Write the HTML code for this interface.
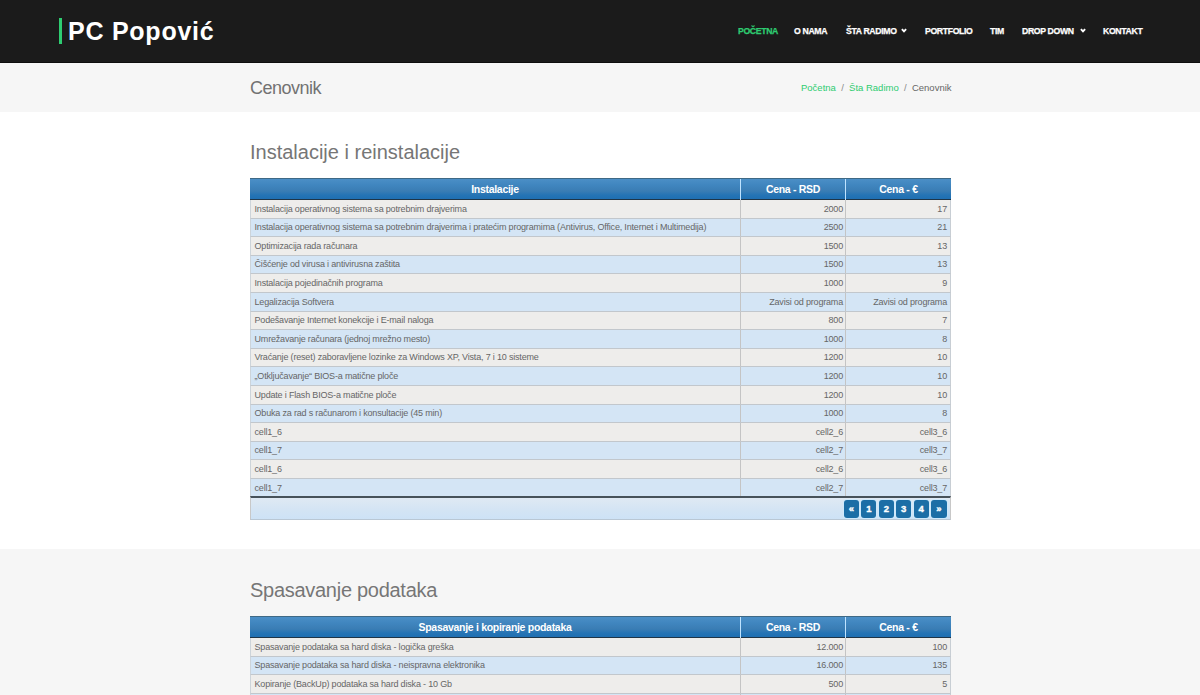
<!DOCTYPE html>
<html><head><meta charset="utf-8">
<style>
*{box-sizing:border-box;margin:0;padding:0}
html,body{width:1200px;height:695px;overflow:hidden;background:#fff;font-family:"Liberation Sans",sans-serif}
.hdr{position:absolute;left:0;top:0;width:1200px;height:63px;background:#1b1b1b;border-bottom:1px solid #0e0e0e}
.logo-bar{position:absolute;left:59px;top:18px;width:3px;height:26px;background:#2ecc71}
.logo{position:absolute;left:68px;top:15px;font-size:25px;font-weight:bold;color:#fff;letter-spacing:0.75px;white-space:nowrap;line-height:32px}
.nav{position:absolute;top:26px;font-size:8.7px;font-weight:bold;color:#fff;white-space:nowrap;line-height:10px;letter-spacing:-0.35px;-webkit-text-stroke:0.25px #fff}
.nav.act{-webkit-text-stroke-color:#2ecc71}
.nav.act{color:#2ecc71}
.chev{position:absolute;top:28px;width:6px;height:5px}
.band{position:absolute;left:0;top:63px;width:1200px;height:49px;background:#f6f6f6}
.ptitle{position:absolute;left:250px;top:77px;font-size:18px;letter-spacing:-0.5px;color:#727272;line-height:22px;white-space:nowrap}
.bc{position:absolute;top:82px;font-size:9.5px;line-height:12px;white-space:nowrap;color:#666}
.bc a{color:#2ecc71;text-decoration:none}
.bc .sep{color:#888}
.sec2{position:absolute;left:0;top:549px;width:1200px;height:146px;background:#f6f6f6}
.h2{position:absolute;left:250px;font-size:20px;color:#767676;line-height:26px;white-space:nowrap}
.tbl{position:absolute;left:250px;width:701px}
.th{position:absolute;left:0;top:0;width:701px;height:22px;background:linear-gradient(#4b8fc6 0%,#4086bf 30%,#3a7db4 60%,#2574b5 80%,#1f6fb2 100%);border-top:1px solid #3f6985;border-bottom:1px solid #1f3547}
.th div{position:absolute;top:0;height:21px;line-height:20px;text-align:center;color:#fff;font-weight:bold;font-size:10.5px;letter-spacing:-0.3px}
.th .d{position:absolute;top:0;width:1px;height:21px;background:#bfe3ff}
.row{position:absolute;left:0;width:701px;border-bottom:1px solid #c2c7cc;border-left:1px solid #cdd4da;border-right:1px solid #c8ced4}
.row.o{background:#eeedeb}
.row.e{background:#d4e5f5}
.row div{position:absolute;top:0;font-size:9px;letter-spacing:-0.18px;color:#666;white-space:nowrap}
.row .c1{left:3.5px}
.row .c2{right:107px;text-align:right}
.row .c3{right:3px;text-align:right}
.row .d{width:1px;background:#c4c4c4;top:0;bottom:0}
.ft{position:absolute;left:0;width:701px;height:24px;background:linear-gradient(#dfe9f3,#d3e4f4 60%,#cde2f6);border-top:2px solid #47525a;border-left:1px solid #c8c8c8;border-right:1px solid #c8c8c8;border-bottom:1px solid #b9c7d4}
.pg{position:absolute;top:2px;width:15px;height:18px;background:#1c6ea6;border-radius:3px;box-shadow:0 0 0 1px #cfe9fb;color:#fff;font-weight:bold;font-size:9.5px;line-height:18px;text-align:center;-webkit-text-stroke:0.35px #fff}
</style></head><body>
<div class="hdr">
  <div class="logo-bar"></div>
  <div class="logo">PC Popović</div>
  <div class="nav act" style="left:738px">POČETNA</div>
  <div class="nav" style="left:794px">O NAMA</div>
  <div class="nav" style="left:846px">ŠTA RADIMO</div>
  <svg class="chev" style="left:901px" viewBox="0 0 6 5"><path d="M0.9 1.2 L3 3.4 L5.1 1.2" stroke="#fff" stroke-width="1.9" fill="none"/></svg>
  <div class="nav" style="left:925px">PORTFOLIO</div>
  <div class="nav" style="left:990px">TIM</div>
  <div class="nav" style="left:1022px">DROP DOWN</div>
  <svg class="chev" style="left:1080px" viewBox="0 0 6 5"><path d="M0.9 1.2 L3 3.4 L5.1 1.2" stroke="#fff" stroke-width="1.9" fill="none"/></svg>
  <div class="nav" style="left:1103px">KONTAKT</div>
</div>
<div class="band">
</div>
<div class="ptitle">Cenovnik</div>
<div class="bc" style="left:801px"><a>Početna</a> <span class="sep">&nbsp;/&nbsp;</span> <a>Šta Radimo</a> <span class="sep">&nbsp;/&nbsp;</span> Cenovnik</div>

<div class="h2" style="top:139px">Instalacije i reinstalacije</div>
<div class="tbl" id="t1" style="top:178px">
<div class="th">
<div style="left:0;width:490px">Instalacije</div>
<div class="d" style="left:490px"></div>
<div style="left:491px;width:104px">Cena - RSD</div>
<div class="d" style="left:595px"></div>
<div style="left:596px;width:105px">Cena - €</div>
</div>
<div class="row o" style="top:22px;height:19px;line-height:18px"><div class="c1">Instalacija operativnog sistema sa potrebnim drajverima</div><div class="d" style="left:489px"></div><div class="c2">2000</div><div class="d" style="left:594px"></div><div class="c3">17</div></div>
<div class="row e" style="top:41px;height:18px;line-height:17px"><div class="c1">Instalacija operativnog sistema sa potrebnim drajverima i pratećim programima (Antivirus, Office, Internet i Multimedija)</div><div class="d" style="left:489px"></div><div class="c2">2500</div><div class="d" style="left:594px"></div><div class="c3">21</div></div>
<div class="row o" style="top:59px;height:19px;line-height:18px"><div class="c1">Optimizacija rada računara</div><div class="d" style="left:489px"></div><div class="c2">1500</div><div class="d" style="left:594px"></div><div class="c3">13</div></div>
<div class="row e" style="top:78px;height:18px;line-height:17px"><div class="c1">Čišćenje od virusa i antivirusna zaštita</div><div class="d" style="left:489px"></div><div class="c2">1500</div><div class="d" style="left:594px"></div><div class="c3">13</div></div>
<div class="row o" style="top:96px;height:19px;line-height:18px"><div class="c1">Instalacija pojedinačnih programa</div><div class="d" style="left:489px"></div><div class="c2">1000</div><div class="d" style="left:594px"></div><div class="c3">9</div></div>
<div class="row e" style="top:115px;height:19px;line-height:18px"><div class="c1">Legalizacija Softvera</div><div class="d" style="left:489px"></div><div class="c2">Zavisi od programa</div><div class="d" style="left:594px"></div><div class="c3">Zavisi od programa</div></div>
<div class="row o" style="top:134px;height:18px;line-height:17px"><div class="c1">Podešavanje Internet konekcije i E-mail naloga</div><div class="d" style="left:489px"></div><div class="c2">800</div><div class="d" style="left:594px"></div><div class="c3">7</div></div>
<div class="row e" style="top:152px;height:19px;line-height:18px"><div class="c1">Umrežavanje računara (jednoj mrežno mesto)</div><div class="d" style="left:489px"></div><div class="c2">1000</div><div class="d" style="left:594px"></div><div class="c3">8</div></div>
<div class="row o" style="top:171px;height:18px;line-height:17px"><div class="c1">Vraćanje (reset) zaboravljene lozinke za Windows XP, Vista, 7 i 10 sisteme</div><div class="d" style="left:489px"></div><div class="c2">1200</div><div class="d" style="left:594px"></div><div class="c3">10</div></div>
<div class="row e" style="top:189px;height:19px;line-height:18px"><div class="c1">„Otključavanje“ BIOS-a matične ploče</div><div class="d" style="left:489px"></div><div class="c2">1200</div><div class="d" style="left:594px"></div><div class="c3">10</div></div>
<div class="row o" style="top:208px;height:19px;line-height:18px"><div class="c1">Update i Flash BIOS-a matične ploče</div><div class="d" style="left:489px"></div><div class="c2">1200</div><div class="d" style="left:594px"></div><div class="c3">10</div></div>
<div class="row e" style="top:227px;height:18px;line-height:17px"><div class="c1">Obuka za rad s računarom i konsultacije (45 min)</div><div class="d" style="left:489px"></div><div class="c2">1000</div><div class="d" style="left:594px"></div><div class="c3">8</div></div>
<div class="row o" style="top:245px;height:19px;line-height:18px"><div class="c1">cell1_6</div><div class="d" style="left:489px"></div><div class="c2">cell2_6</div><div class="d" style="left:594px"></div><div class="c3">cell3_6</div></div>
<div class="row e" style="top:264px;height:18px;line-height:17px"><div class="c1">cell1_7</div><div class="d" style="left:489px"></div><div class="c2">cell2_7</div><div class="d" style="left:594px"></div><div class="c3">cell3_7</div></div>
<div class="row o" style="top:282px;height:19px;line-height:18px"><div class="c1">cell1_6</div><div class="d" style="left:489px"></div><div class="c2">cell2_6</div><div class="d" style="left:594px"></div><div class="c3">cell3_6</div></div>
<div class="row e" style="top:301px;height:19px;line-height:18px"><div class="c1">cell1_7</div><div class="d" style="left:489px"></div><div class="c2">cell2_7</div><div class="d" style="left:594px"></div><div class="c3">cell3_7</div></div>
<div class="ft" style="top:318px">
<div class="pg" style="left:593.0px;width:15px">«</div>
<div class="pg" style="left:610.4px;width:15px">1</div>
<div class="pg" style="left:627.8px;width:15px">2</div>
<div class="pg" style="left:645.2px;width:15px">3</div>
<div class="pg" style="left:662.6px;width:15px">4</div>
<div class="pg" style="left:680.0px;width:16px">»</div>
</div>
</div>

<div class="sec2"></div>
<div class="h2" style="top:577px;letter-spacing:-0.28px">Spasavanje podataka</div>
<div class="tbl" id="t2" style="top:616px">
<div class="th">
<div style="left:0;width:490px">Spasavanje i kopiranje podataka</div>
<div class="d" style="left:490px"></div>
<div style="left:491px;width:104px">Cena - RSD</div>
<div class="d" style="left:595px"></div>
<div style="left:596px;width:105px">Cena - €</div>
</div>
<div class="row o" style="top:22px;height:19px;line-height:18px"><div class="c1">Spasavanje podataka sa hard diska - logička greška</div><div class="d" style="left:489px"></div><div class="c2">12.000</div><div class="d" style="left:594px"></div><div class="c3">100</div></div>
<div class="row e" style="top:41px;height:18px;line-height:17px"><div class="c1">Spasavanje podataka sa hard diska - neispravna elektronika</div><div class="d" style="left:489px"></div><div class="c2">16.000</div><div class="d" style="left:594px"></div><div class="c3">135</div></div>
<div class="row o" style="top:59px;height:19px;line-height:18px"><div class="c1">Kopiranje (BackUp) podataka sa hard diska - 10 Gb</div><div class="d" style="left:489px"></div><div class="c2">500</div><div class="d" style="left:594px"></div><div class="c3">5</div></div>
<div class="row e" style="top:78px;height:18px;line-height:17px"><div class="c1">Kopiranje (BackUp) podataka sa hard diska - 10 Gb</div><div class="d" style="left:489px"></div><div class="c2">500</div><div class="d" style="left:594px"></div><div class="c3">5</div></div>
</div>

</body></html>
